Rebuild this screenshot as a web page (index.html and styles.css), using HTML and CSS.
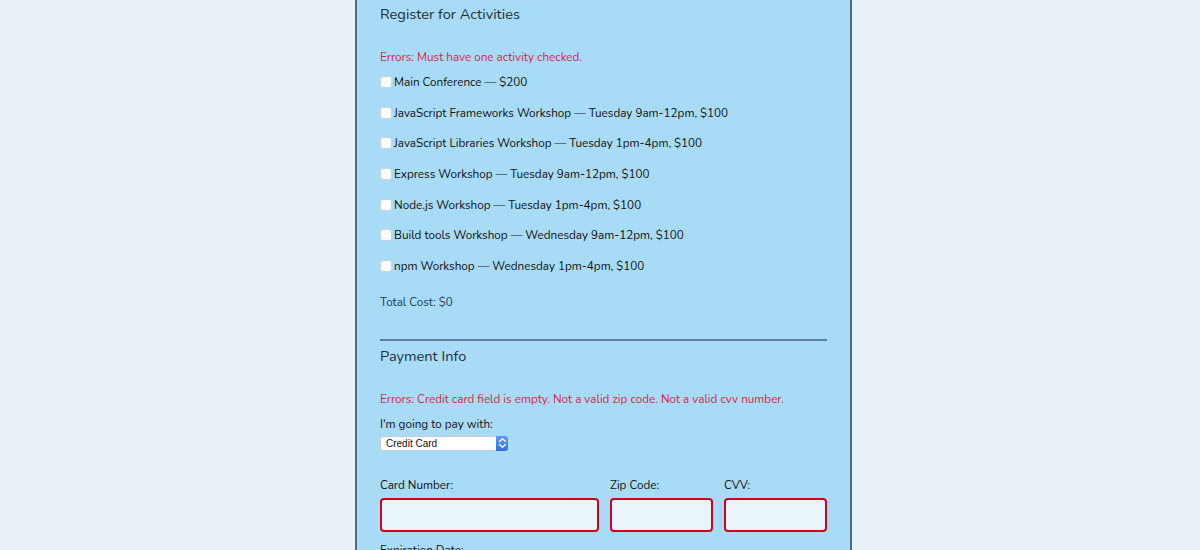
FILE: index.html
```html
<!DOCTYPE html>
<html>
<head>
<meta charset="utf-8">
<link rel="stylesheet" href="styles.css">
</head>
<body>
<form class="form">
  <section class="activities">
    <h2 class="legend">Register for Activities</h2>
    <p class="error">Errors: Must have one activity checked.</p>
    <label class="activity"><input type="checkbox"> Main Conference — $200</label>
    <label class="activity"><input type="checkbox"> JavaScript Frameworks Workshop — Tuesday 9am-12pm, $100</label>
    <label class="activity"><input type="checkbox"> JavaScript Libraries Workshop — Tuesday 1pm-4pm, $100</label>
    <label class="activity"><input type="checkbox"> Express Workshop — Tuesday 9am-12pm, $100</label>
    <label class="activity"><input type="checkbox"> Node.js Workshop — Tuesday 1pm-4pm, $100</label>
    <label class="activity"><input type="checkbox"> Build tools Workshop — Wednesday 9am-12pm, $100</label>
    <label class="activity"><input type="checkbox"> npm Workshop — Wednesday 1pm-4pm, $100</label>
    <p class="total">Total Cost: $0</p>
  </section>
  <section class="payment">
    <h2 class="legend">Payment Info</h2>
    <p class="error">Errors: Credit card field is empty. Not a valid zip code. Not a valid cvv number.</p>
    <label class="pay-label">I'm going to pay with:</label>
    <div class="select-wrap">
      <select class="select"><option>Credit Card</option></select>
      <span class="select-arrow"><svg width="9" height="12" viewBox="0 0 9 12"><path d="M1.5 4.5 L4.5 1.8 L7.5 4.5 M1.5 7.5 L4.5 10.2 L7.5 7.5" fill="none" stroke="#fff" stroke-width="1.4" stroke-linecap="round" stroke-linejoin="round"/></svg></span>
    </div>
    <div class="card-row">
      <div class="field field-cc">
        <label class="field-label">Card Number:</label>
        <input class="input" type="text">
      </div>
      <div class="field field-sm">
        <label class="field-label">Zip Code:</label>
        <input class="input" type="text">
      </div>
      <div class="field field-sm">
        <label class="field-label">CVV:</label>
        <input class="input" type="text">
      </div>
    </div>
    <label class="field-label exp">Expiration Date:</label>
  </section>
</form>
</body>
</html>
```
FILE: styles.css
```css
html, body {
  margin: 0;
  padding: 0;
}
body {
  background: #e7f0f4;
  font-family: "Nunito", "Lato", "Noto Sans", sans-serif;
  color: #1d2a36;
  height: 550px;
  overflow: hidden;
}
.form {
  width: 447px;
  margin: 0 0 0 355px;
  padding: 4px 23px 40px 23px;
  background: #a8dbf6;
  border-left: 2px solid #4b6d87;
  border-right: 2px solid #4b6d87;
  min-height: 600px;
}
.legend {
  margin: 0;
  font-size: 14.6px;
  line-height: 20px;
  font-weight: 400;
  color: #1e2d3b;
}
.error {
  margin: 25px 0 0 0;
  font-size: 11.7px;
  line-height: 16px;
  color: #d8263f;
}
.activities .error {
  margin-bottom: 8px;
}
.activity {
  display: flex;
  align-items: center;
  height: 18px;
  margin-bottom: 12.67px;
  font-size: 11.7px;
  line-height: 18px;
  color: #111;
}
.activity input {
  width: 12px;
  height: 12px;
  margin: 0 2px 0 0;
  -webkit-appearance: none;
  appearance: none;
  background: #fff;
  border: 1px solid #c9d3da;
  border-radius: 3px;
}
.total {
  margin: 19px 0 0 0;
  font-size: 11.7px;
  line-height: 16px;
  color: #263a4c;
}
.payment {
  border-top: 2px solid #5e7f98;
  margin-top: 29px;
  padding-top: 5px;
}
.payment .error {
  margin-bottom: 9px;
}
.pay-label {
  display: block;
  font-size: 11.7px;
  line-height: 16px;
  color: #111;
}
.select-wrap {
  position: relative;
  width: 128px;
  height: 15px;
  margin-top: 4px;
}
.select {
  -webkit-appearance: none;
  appearance: none;
  display: block;
  width: 128px;
  height: 15px;
  margin: 0;
  padding: 0 0 0 5px;
  border: 1px solid #c5ccd2;
  border-radius: 3px;
  background: #fff;
  font-family: "Liberation Sans", Arial, sans-serif;
  font-size: 10px;
  line-height: 13px;
  color: #111;
}
.select-arrow {
  position: absolute;
  right: 0;
  top: 0;
  width: 12px;
  height: 15px;
  border-radius: 0 3px 3px 0;
  background: linear-gradient(#5e9cf5, #2f6fe0);
  display: flex;
  align-items: center;
  justify-content: center;
}
.card-row {
  display: flex;
  gap: 11px;
  margin-top: 26px;
}
.field {
  display: flex;
  flex-direction: column;
}
.field-cc {
  width: 219px;
}
.field-sm {
  width: 103px;
}
.field-label {
  display: block;
  font-size: 11.7px;
  line-height: 16px;
  color: #111;
  margin-bottom: 5px;
}
.input {
  box-sizing: border-box;
  width: 100%;
  height: 34px;
  margin: 0;
  border: 2px solid #d0021b;
  border-radius: 4px;
  background: #eaf5fb;
}
.exp {
  margin-top: 10px;
}
```
